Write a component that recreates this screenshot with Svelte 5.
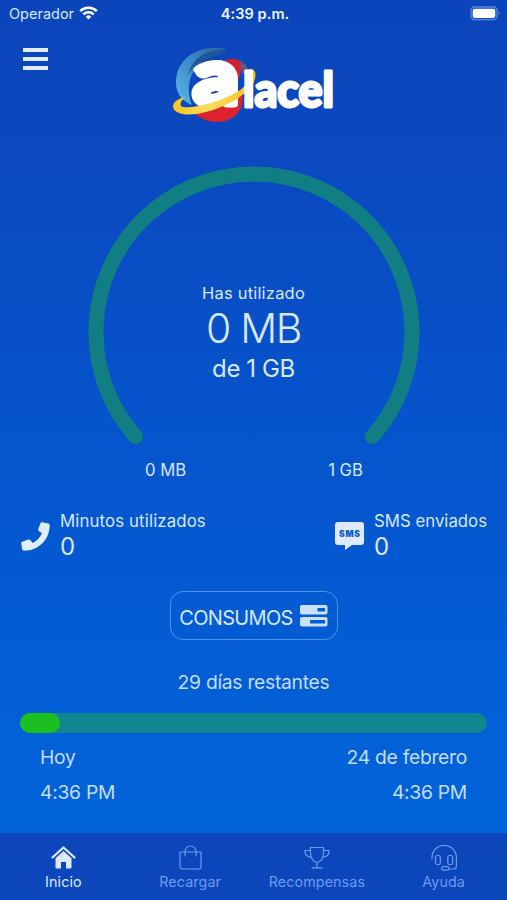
<script>
  // Data usage
  let usage = {
    used: '0 MB',
    total: '1 GB',
    minutes: 0,
    sms: 0
  };

  // Current billing cycle
  let daysLeft = 29;
  let progress = 8.5;
  let start = { day: 'Hoy', time: '4:36 PM' };
  let end = { day: '24 de febrero', time: '4:36 PM' };

  const tabs = [
    { id: 'home', label: 'Inicio' },
    { id: 'bag', label: 'Recargar' },
    { id: 'trophy', label: 'Recompensas' },
    { id: 'support', label: 'Ayuda' }
  ];

  let active = 'home';
</script>

<div class="app">
  <div class="status-bar">
    <div class="carrier">
      <span>Operador</span>
      <svg width="19" height="14" viewBox="0 0 19 14" fill="none" stroke="#fff" stroke-width="2.5">
        <path d="M1.2 5.2a11.8 11.8 0 0 1 16.6 0" />
        <path d="M4.3 8.3a7.5 7.5 0 0 1 10.4 0" />
        <path d="M9.5 13.6 6.7 10.7a4 4 0 0 1 5.6 0z" fill="#fff" stroke="none" />
      </svg>
    </div>
    <div class="clock">4:39 p.m.</div>
    <div class="battery">
      <svg width="31" height="15" viewBox="0 0 31 15">
        <rect x="1" y="1" width="26" height="12.6" rx="3.6" fill="none" stroke="#5b89dc" stroke-width="1.3" />
        <rect x="2.7" y="2.7" width="22.6" height="9.2" rx="2" fill="#fff" />
        <path d="M28.6 5.2q2 2.1 0 4.2z" fill="#5b89dc" />
      </svg>
    </div>
  </div>

  <header>
    <button class="menu" aria-label="Menu">
      <span></span>
      <span></span>
      <span></span>
    </button>
    <svg class="logo" width="164" height="104" viewBox="0 -18 164 104">
      <defs>
        <linearGradient id="sky" x1="0" y1="1" x2="1" y2="0">
          <stop offset="0" stop-color="#5bb9e8" />
          <stop offset="0.45" stop-color="#3f91cb" />
          <stop offset="1" stop-color="#245f9f" />
        </linearGradient>
        <linearGradient id="gold" x1="0" y1="0" x2="1" y2="0">
          <stop offset="0" stop-color="#f3c51d" />
          <stop offset="0.45" stop-color="#ffdc61" />
          <stop offset="1" stop-color="#f5bf0c" />
        </linearGradient>
      </defs>
      <path d="M54 3C26-3 4 12 3 35c-.5 11 5 20 16 24C10 36 20 12 54 3z" fill="url(#sky)" />
      <path d="M45 4c-16 2-26 10-30 25 7-11 14-15 20-16 7-1 10-5 18-8z" fill="#1d5797" />
      <path d="M52 14c10-3 17 0 17 7l-3 12z" fill="#d3222d" />
      <path d="M67 14c6 4 9 9 11 16l-9-3z" fill="#61577f" />
      <path d="M17 62c12-1 34-5 51-16 6 14-5 30-24 30-11 0-20-5-27-14z" fill="#df2230" />
      <text class="big" x="20.500" y="57.500" textLength="45" lengthAdjust="spacingAndGlyphs">a</text>
      <path d="M12 51C2 53-2 59 1 63.500c6 8 28 6 49-3.500 19-8 32-19 32.500-31 0-4-2-6-6.500-6 3 10-2 17-12 23-15 9-43 17-54 15-4-1-3-5 2-10z" fill="url(#gold)" />
      <text class="word" x="70" y="61" textLength="91" lengthAdjust="spacingAndGlyphs">lacel</text>
    </svg>
  </header>

  <section class="gauge">
    <svg width="332" height="280" viewBox="0 0 332 280">
      <path d="M47.5 270.5A158 158 0 1 1 284.5 270.5" />
    </svg>
    <div class="reading">
      <span class="caption">Has utilizado</span>
      <span class="used">{usage.used}</span>
      <span class="total">de {usage.total}</span>
    </div>
  </section>
  <div class="limits">
    <span>0 MB</span>
    <span>{usage.total}</span>
  </div>

  <section class="stats">
    <div class="stat">
      <svg width="29" height="29" viewBox="0 0 29 29" fill="#e2edfc">
        <path d="M19.500 1.200q.4-1.300 1.700-1l6 1.200q1.500.3 1.500 1.800C28.500 18 17.500 28.600 3 28.700q-1.500 0-1.800-1.400L.2 21.500q-.2-1.300 1-1.800l6-2.200q1.200-.4 2 .5l2.500 3c4-2 7.500-5.500 9.200-9.700l-3-2.300q-1-.8-.6-2z" />
      </svg>
      <div>
        <div class="stat-label minutes">Minutos utilizados</div>
        <div class="stat-value">{usage.minutes}</div>
      </div>
    </div>
    <div class="stat">
      <svg width="29" height="29" viewBox="0 0 29 29">
        <path d="M3 0h23a3 3 0 0 1 3 3v17a3 3 0 0 1-3 3h-9l-7 5v-5H3a3 3 0 0 1-3-3V3a3 3 0 0 1 3-3z" fill="#dceafc" />
        <text class="sms" x="4" y="14.600" textLength="21">SMS</text>
      </svg>
      <div>
        <div class="stat-label">SMS enviados</div>
        <div class="stat-value">{usage.sms}</div>
      </div>
    </div>
  </section>

  <button class="consumos">
    <span>CONSUMOS</span>
    <svg width="28" height="22" viewBox="0 0 28 22">
      <rect x="0" y="0" width="27.500" height="9.500" rx="2" fill="#c9dffa" />
      <rect x="0" y="12" width="27.500" height="9.500" rx="2" fill="#c9dffa" />
      <rect x="17.500" y="3" width="7.500" height="3.500" fill="#0260d4" />
      <rect x="10" y="15" width="15" height="3.500" fill="#0260d4" />
    </svg>
  </button>

  <section class="cycle">
    <div class="days">{daysLeft} días restantes</div>
    <div class="bar">
      <div class="fill" style="width: {progress}%"></div>
    </div>
    <div class="row">
      <span>{start.day}</span>
      <span>{end.day}</span>
    </div>
    <div class="row">
      <span>{start.time}</span>
      <span>{end.time}</span>
    </div>
  </section>

  <nav>
    {#each tabs as tab}
      <button class="tab" class:active={tab.id === active} on:click={() => (active = tab.id)}>
        <svg width="28" height="28" viewBox="0 0 28 28" fill="none" stroke="currentColor" stroke-width="1.2" stroke-linecap="round" stroke-linejoin="round">
          {#if tab.id === 'home'}
            <path d="M3.500 14.500 14.500 4.500l11 10" stroke-width="2.300" />
            <path d="M14.500 8 6.500 15.200V24.500q0 1 1 1H12V19h5v6.500h4.500q1 0 1-1v-9.300z" fill="currentColor" stroke="none" />
          {:else if tab.id === 'bag'}
            <path d="M4 9h21v14.500q0 2.500-2.500 2.500h-16Q4 26 4 23.500zM9 13V8.500a5.500 5.500 0 0 1 11 0V13" />
          {:else if tab.id === 'trophy'}
            <path d="M7.500 4.500h13v6c0 5-3 8.500-6.500 9-3.500-.5-6.500-4-6.500-9zM7.500 7.500H1.800c0 4 2.200 6.500 7 7M20.500 7.500h5.700c0 4-2.200 6.500-7 7M14 19.500v5M9 24.800h10" />
          {:else}
            <path d="M2 16v-1.500a12.200 12.200 0 0 1 24.400 0V23q0 3-3 3H19" />
            <rect x="5.500" y="12.500" width="4.800" height="9" rx="1.500" />
            <rect x="17.800" y="12.500" width="4.800" height="9" rx="1.500" />
            <rect x="11.500" y="23.600" width="7.500" height="3.600" rx="1.800" />
          {/if}
        </svg>
        <span>{tab.label}</span>
      </button>
    {/each}
  </nav>
</div>

<style>
  :global(body) {
    margin: 0;
  }

  .app {
    display: flex;
    flex-direction: column;
    width: 507px;
    height: 900px;
    overflow: hidden;
    background: linear-gradient(#0b45bb 0, #0b47bd 110px, #0654cc 430px, #0164da 833px);
    color: #d7e7fc;
    font-family: Inter, 'Liberation Sans', sans-serif;
  }

  button {
    padding: 0;
    border: none;
    background: none;
    color: inherit;
    font-family: inherit;
    cursor: pointer;
  }

  .status-bar {
    display: grid;
    grid-template-columns: 1fr auto 1fr;
    align-items: center;
    height: 27px;
    padding: 0 6px 1px 9px;
    font-size: 14.5px;
  }

  .carrier {
    display: flex;
    align-items: center;
    gap: 5px;
  }

  .carrier svg {
    margin-top: -2px;
  }

  .clock {
    color: #f1f5fd;
    font-weight: 600;
    font-size: 14.5px;
    letter-spacing: 0.1px;
  }

  .battery {
    display: flex;
    justify-content: flex-end;
  }

  header {
    display: flex;
    height: 104px;
    padding-left: 23px;
  }

  .menu {
    display: flex;
    flex-direction: column;
    gap: 5px;
    width: 25px;
    height: 22px;
    margin-top: 20px;
  }

  .menu span {
    width: 25px;
    height: 4px;
    background: #e2ebfc;
  }

  .logo {
    margin: 0 0 0 125px;
    overflow: visible;
  }

  .big,
  .word {
    fill: #fff;
    stroke: #fff;
    stroke-linejoin: round;
    font-family: Lato, 'Open Sans', sans-serif;
    font-weight: 900;
  }

  .big {
    stroke-width: 7px;
    font-size: 78px;
  }

  .word {
    stroke-width: 2.8px;
    font-size: 48px;
  }

  .gauge {
    display: grid;
    justify-items: center;
    margin-top: 34px;
    height: 280px;
  }

  .gauge > * {
    grid-area: 1 / 1;
  }

  .gauge path {
    fill: none;
    stroke: #117e84;
    stroke-width: 15;
    stroke-linecap: round;
  }

  .reading {
    display: flex;
    flex-direction: column;
    align-items: center;
    padding-top: 117px;
  }

  .caption {
    font-size: 16.5px;
    line-height: 20px;
    letter-spacing: 0.2px;
  }

  .used {
    font-size: 41px;
    font-weight: 300;
    line-height: 51px;
    letter-spacing: -1.4px;
  }

  .total {
    font-size: 24px;
    line-height: 29px;
    letter-spacing: -0.4px;
  }

  .limits {
    display: flex;
    justify-content: space-between;
    padding: 13px 144px 0 145px;
    font-size: 16.7px;
    line-height: 22px;
  }

  .stats {
    display: flex;
    justify-content: space-between;
    padding: 0 20px 0 21px;
    margin-top: 29px;
  }

  .stat {
    display: flex;
    gap: 10px;
  }

  .stat > svg {
    margin-top: 12px;
  }

  .stat-label {
    font-size: 16.8px;
    line-height: 23px;
    height: 22px;
  }

  .minutes {
    letter-spacing: 0.13px;
  }

  .stat-value {
    font-size: 24px;
    line-height: 30px;
    height: 28px;
  }

  .sms {
    fill: #0759cc;
    font-size: 8.5px;
    font-weight: 900;
  }

  .consumos {
    display: flex;
    align-items: center;
    justify-content: center;
    align-self: center;
    gap: 7px;
    box-sizing: border-box;
    width: 168px;
    height: 49px;
    margin-top: 31px;
    border: 1.5px solid #4c92e8;
    border-radius: 13px;
    font-size: 20px;
    letter-spacing: -0.7px;
  }

  .consumos span {
    padding-top: 5px;
  }

  .cycle {
    padding: 30px 20px 0;
    font-size: 19.3px;
    letter-spacing: -0.28px;
    color: #c3dcfa;
  }

  .days {
    text-align: center;
    line-height: 25px;
    height: 26px;
  }

  .bar {
    height: 20px;
    margin-top: 17px;
    margin-bottom: 7px;
    border-radius: 10px;
    background: #10868e;
  }

  .fill {
    height: 100%;
    border-radius: 10px;
    background: #1cbf20;
  }

  .row {
    display: flex;
    justify-content: space-between;
    padding: 0 20px;
    line-height: 35px;
  }

  nav {
    display: flex;
    height: 67px;
    margin-top: auto;
    background: #0b46ba;
  }

  .tab {
    display: flex;
    flex: 1;
    flex-direction: column;
    align-items: center;
    padding-top: 10px;
    color: #6d9af0;
    font-size: 14.3px;
    line-height: 21px;
    letter-spacing: 0.1px;
  }

  .tab.active {
    color: #dce8fd;
  }
</style>
